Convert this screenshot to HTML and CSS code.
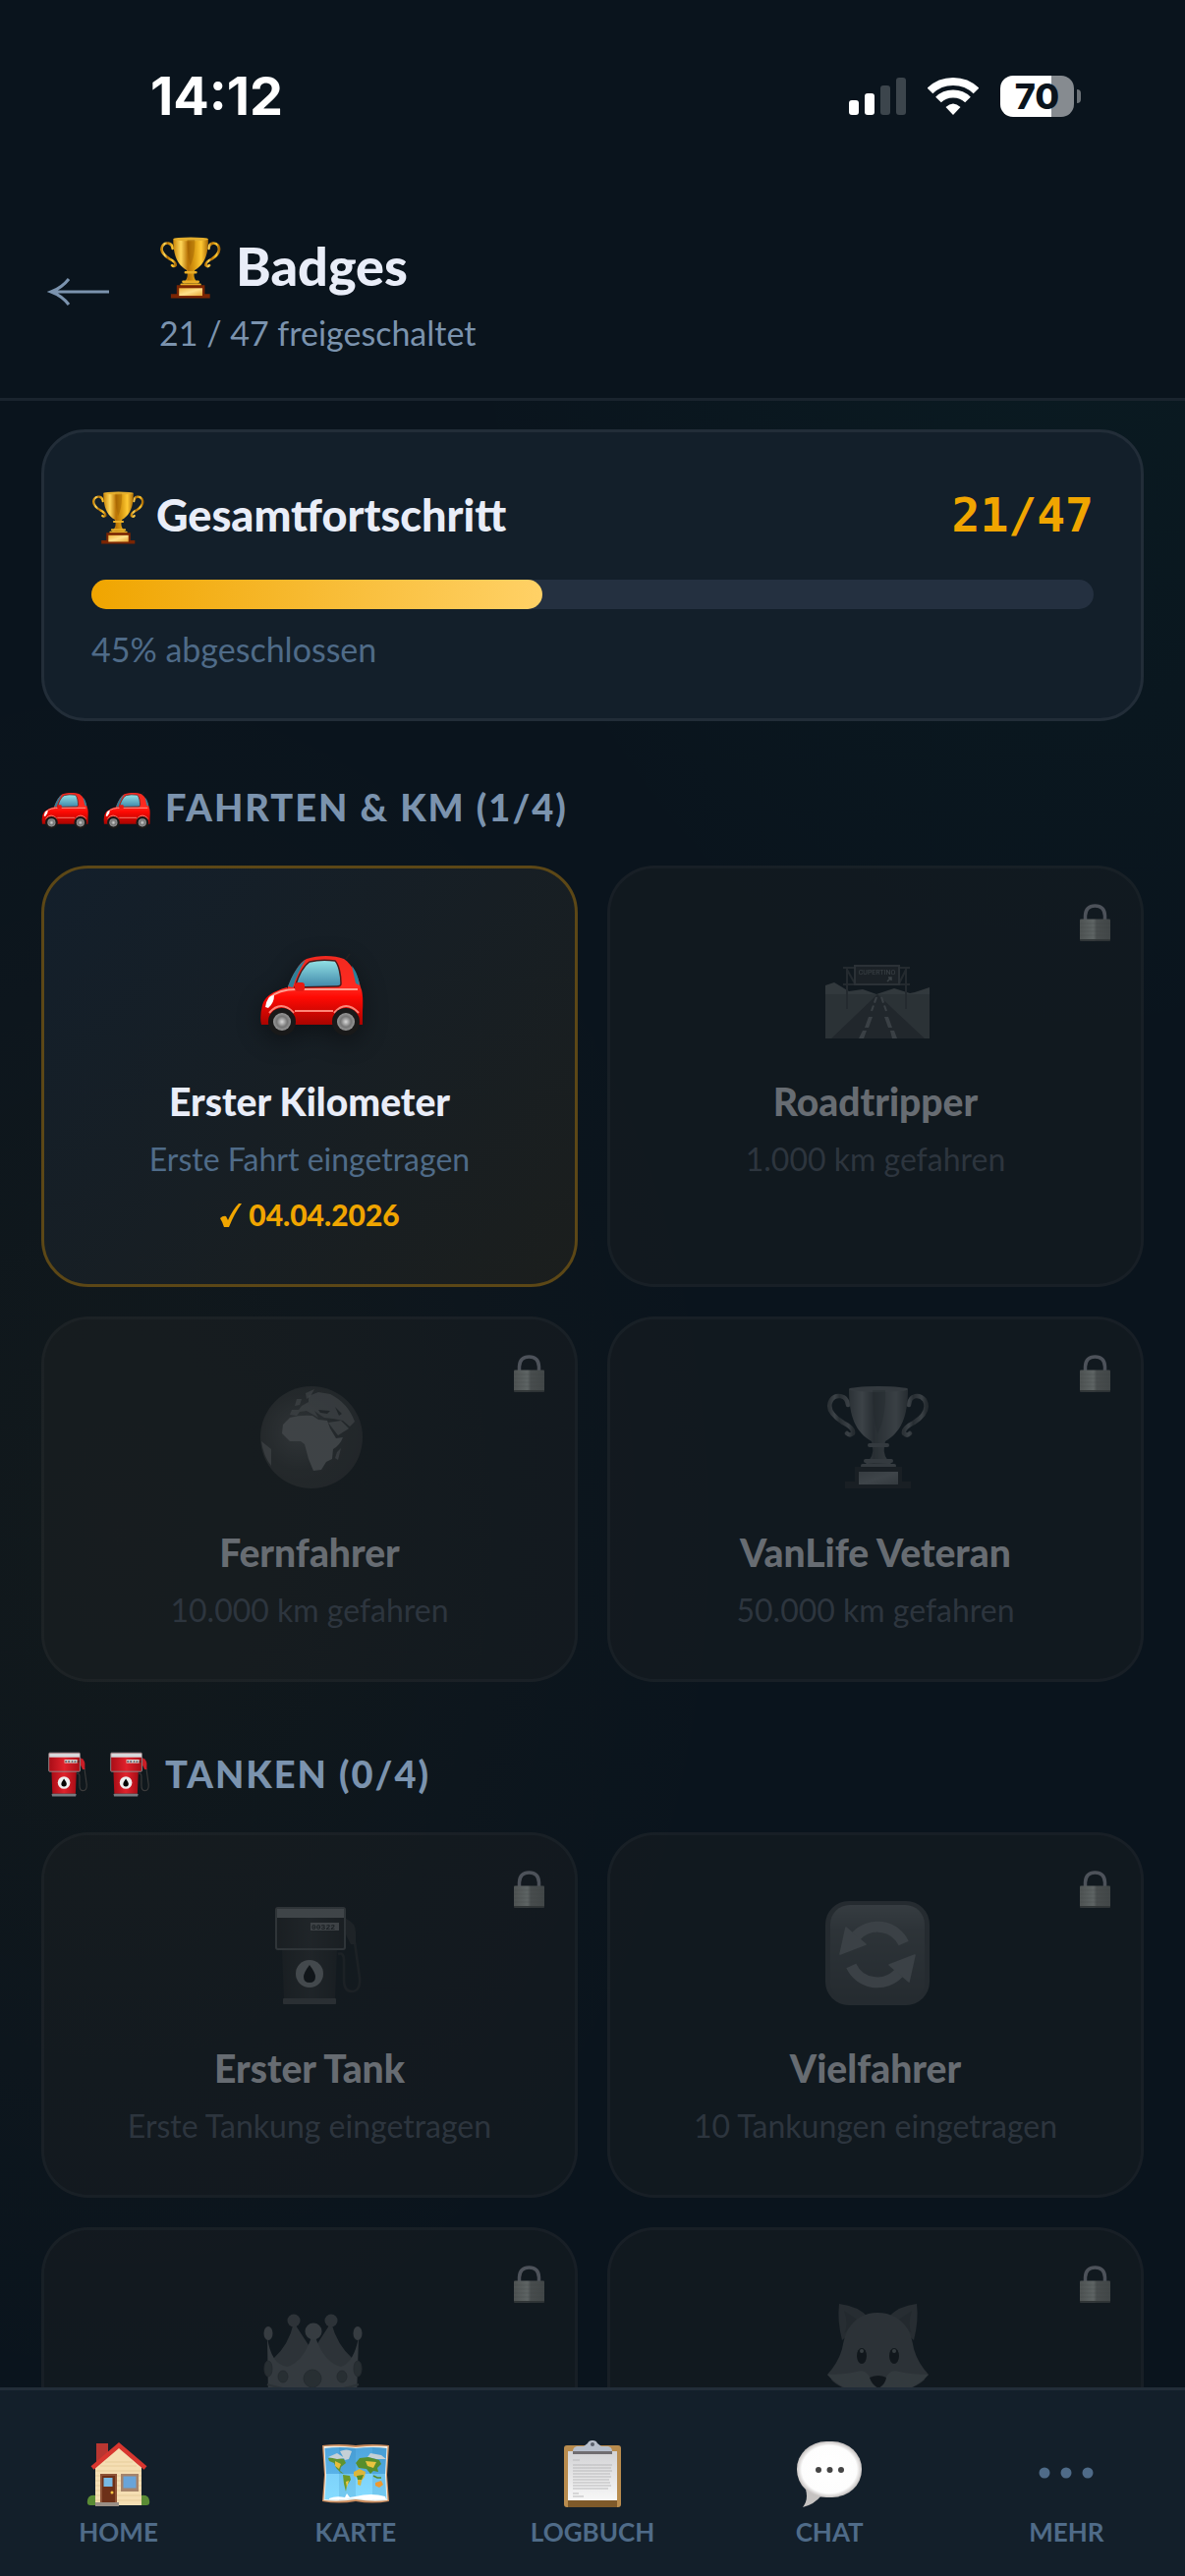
FILE: index.html
```html
<!DOCTYPE html>
<html lang="de">
<head>
<meta charset="utf-8">
<meta name="viewport" content="width=device-width, initial-scale=1">
<title>Badges</title>
<link rel="stylesheet" href="styles.css">
</head>
<body>
<svg class="sprite" aria-hidden="true">
  <defs>
    <linearGradient id="gold" x1="0" x2="1" y1="0" y2="0">
      <stop offset="0" stop-color="#c88408"/><stop offset=".22" stop-color="#ffd75a"/><stop offset=".42" stop-color="#b87204"/><stop offset=".6" stop-color="#d99a12"/><stop offset=".8" stop-color="#ffc933"/><stop offset="1" stop-color="#a86803"/>
    </linearGradient>
    <linearGradient id="plate" x1="0" x2="1" y1="0" y2="1">
      <stop offset="0" stop-color="#f0b640"/><stop offset=".5" stop-color="#ffe08a"/><stop offset="1" stop-color="#e8a838"/>
    </linearGradient>
    <linearGradient id="carRed" x1="0" x2="0" y1="0" y2="1">
      <stop offset="0" stop-color="#f02a20"/><stop offset=".45" stop-color="#ff2a20"/><stop offset=".6" stop-color="#ff0a04"/><stop offset="1" stop-color="#a80400"/>
    </linearGradient>
    <linearGradient id="glass" x1="0" x2="0" y1="0" y2="1">
      <stop offset="0" stop-color="#93e2e6"/><stop offset="1" stop-color="#3f86a8"/>
    </linearGradient>
    <radialGradient id="hub"><stop offset="0" stop-color="#d8d8d8"/><stop offset=".6" stop-color="#757575"/><stop offset="1" stop-color="#999"/></radialGradient>
    <linearGradient id="pumpRed" x1="0" x2="1" y1="0" y2="0">
      <stop offset="0" stop-color="#a80d16"/><stop offset=".5" stop-color="#e0222c"/><stop offset="1" stop-color="#a80d16"/>
    </linearGradient>
    <linearGradient id="key" x1="0" x2="0" y1="0" y2="1">
      <stop offset="0" stop-color="#b4bac2"/><stop offset=".25" stop-color="#8a929c"/><stop offset="1" stop-color="#646c76"/>
    </linearGradient>
    <radialGradient id="ocean" cx=".38" cy=".45" r=".62">
      <stop offset="0" stop-color="#8e8e8e"/><stop offset=".6" stop-color="#565656"/><stop offset="1" stop-color="#4e4e4e"/>
    </radialGradient>
    <linearGradient id="lockBody" x1="0" x2="1" y1="0" y2="0">
      <stop offset="0" stop-color="#4e5353"/><stop offset=".45" stop-color="#5e6464"/><stop offset=".55" stop-color="#484d4e"/><stop offset="1" stop-color="#414647"/>
    </linearGradient>
    <radialGradient id="bubble"><stop offset="0" stop-color="#fff"/><stop offset=".85" stop-color="#fdfdfd"/><stop offset="1" stop-color="#c9c5c4"/></radialGradient>
    <linearGradient id="sea" x1="0" x2="0" y1="0" y2="1">
      <stop offset="0" stop-color="#4fa6dd"/><stop offset=".5" stop-color="#58b2e8"/><stop offset=".5" stop-color="#7dd2fb"/><stop offset="1" stop-color="#86dcff"/>
    </linearGradient>
    <linearGradient id="paper" x1="0" x2="0" y1="0" y2="1"><stop offset="0" stop-color="#d3d3d5"/><stop offset="1" stop-color="#f7f7f7"/></linearGradient>

    <symbol id="trophy" viewBox="0 0 106 106">
      <g fill="none" stroke="url(#gold)" stroke-width="4.500" stroke-linecap="round">
        <path d="M23 20C22 9 10 9 6 15C0 25 10 33 18 38C24 41 29 45 28 49Q25 52 22 49"/>
        <path d="M85 20C86 9 96 9 101 15C106 25 98 33 90 38C84 41 79 45 80 49Q83 52 86 49"/>
      </g>
      <path d="M24 4C24 32 31 48 47 57L48 62Q50 72 41 80H67Q58 72 60 62L61 57C77 48 84 32 84 4Z" fill="url(#gold)"/>
      <ellipse cx="54" cy="4" rx="30" ry="3" fill="#e4ae2c"/>
      <path d="M48 5Q48 32 53 50Q62 32 61 5Z" fill="#8d5200" opacity=".35"/>
      <path d="M45 61H63M41 77H67M38 82H70" stroke="#e9ae28" stroke-width="4" stroke-linecap="round"/>
      <path d="M30 83H78V98H87V105H20V98H30Z" fill="#7a2503"/>
      <rect x="34" y="88" width="40" height="13" fill="url(#plate)"/>
    </symbol>

    <symbol id="car" viewBox="0 0 106 106">
      <path d="M88 25L92 20" stroke="#222" stroke-width="1.500"/>
      <path d="M28 56C34 40 41 28 48 25C60 21 76 21 86 25C95 31 101 44 103 54Q106 60 105 78V92H2Q0 84 3 72Q6 60 28 54Z" fill="url(#carRed)"/>
      <path d="M29 53C34 40 40 30 47 26C42 34 37 44 34 54ZM94 32C99 38 101 45 102 52L98 50Z" fill="#2f7f98"/>
      <path d="M36 54C40 41 45 32 51 28Q63 25 77 27C81 31 83 42 83 50Q83 53 79 53Z" fill="url(#glass)" stroke="#4b1a1a" stroke-width="1.500"/>
      <path d="M10 65Q20 55 42 56H100" fill="none" stroke="#ff9d90" stroke-width="2"/>
      <path d="M10 80Q22 66 35 80M76 80Q88 66 101 80M36 78H75" fill="none" stroke="#ff8577" stroke-width="2"/>
      <path d="M6 74Q8 62 15 62Q15 70 9 75Z" fill="#fff"/>
      <rect x="36" y="49" width="10" height="9" rx="3" fill="#e81811"/>
      <g><circle cx="23" cy="89" r="14" fill="#191919"/><circle cx="88" cy="89" r="14" fill="#191919"/><circle cx="23" cy="89" r="9" fill="url(#hub)"/><circle cx="88" cy="89" r="9" fill="url(#hub)"/></g>
    </symbol>

    <symbol id="pump" viewBox="0 0 106 106">
      <path d="M80 54Q86 52 86 60V80Q86 92 94 92Q103 92 102 78L97 42" fill="none" stroke="#3b3b3b" stroke-width="2.500"/>
      <path d="M88 18Q98 22 98 32V44H93L88 34Z" fill="#c91e27"/>
      <path d="M23 48H79L77 99H25Z" fill="url(#pumpRed)"/>
      <rect x="17" y="7" width="70" height="42" rx="2" fill="url(#pumpRed)" stroke="#8d9091" stroke-width="2"/>
      <rect x="18" y="8" width="68" height="9" fill="#d7d9dc"/>
      <rect x="52" y="22" width="29" height="8" fill="#d8cfce"/>
      <text x="53" y="29" font-family="Liberation Mono, monospace" font-size="8" font-weight="700" fill="#333">00322</text>
      <rect x="24" y="99" width="54" height="6" rx="1" fill="#777b80"/>
      <circle cx="51" cy="74" r="14" fill="#eee"/>
      <path d="M51 65Q45 73 45 77Q45 83 51 83Q57 83 57 77Q57 73 51 65Z" fill="#050505"/>
    </symbol>

    <symbol id="road" viewBox="0 0 106 106">
      <path d="M0 52L9 49L24 58L38 56L52 61L70 55L86 60L91 59L106 54V63H0Z" fill="#a5a9ae"/>
      <rect y="61" width="106" height="45" fill="#868a8e"/>
      <path d="M53 61L6 106H101Z" fill="#54595e"/>
      <path d="M52 64L47 78M57 64L62 78" stroke="#c8ccd0" stroke-width="2" stroke-dasharray="6 3"/>
      <path d="M44 84H48L44 95H40ZM60 84H64L68 95H64ZM38 98H42L39 106H34ZM66 98H70L73 106H68Z" fill="#c8ccd0"/>
      <path d="M18 34H86M18 51H86M22 34V76M82 34V76M22 36L30 50M82 36L75 50" stroke="#62676b" stroke-width="2"/>
      <rect x="30" y="32" width="45" height="19" fill="#3b4045" stroke="#82878c" stroke-width="2"/>
      <text x="52.500" y="41" text-anchor="middle" font-family="Roboto, sans-serif" font-size="7" fill="#c8ccd0">CUPERTINO</text>
      <path d="M63 48L67 44M64 44H67V47" stroke="#c8ccd0" stroke-width="1.500" fill="none"/>
    </symbol>

    <symbol id="globe" viewBox="0 0 106 106">
      <circle cx="53" cy="53" r="52" fill="url(#ocean)"/>
      <g fill="#cfcfcf">
        <path d="M31 33Q42 30 54 31L60 35L69 36L72 44L78 54L85 53Q82 61 75 65L74 75L68 78L63 86L55 87L50 75L46 60L42 57L31 57L23 49L24 40Z"/>
        <path d="M31 30L33 25H40L43 21L50 17V11L60 7L72 9Q90 18 97 37L92 42L85 36L75 34L66 33L60 29L56 26L60 33L55 30L48 26L41 27L38 31Z" opacity=".7"/>
        <path d="M70 38L83 36L91 44L80 51Z" opacity=".8"/>
        <path d="M2 57L12 65L12 82Q4 72 2 57ZM79 68L83 64L80 76L77 74ZM38 14L43 14L41 20L36 21ZM47 8L56 4L52 11L48 14Z" opacity=".7"/>
      </g>
      <path d="M60 25L72 26L69 29L62 28ZM77 22L84 29L81 31Z" fill="#4b4b4b"/>
    </symbol>

    <symbol id="refresh" viewBox="0 0 106 106">
      <rect width="106" height="106" rx="24" fill="#666e78"/>
      <rect x="5" y="4" width="96" height="98" rx="20" fill="url(#key)"/>
      <g id="turn"><path d="M79.700 43A29.500 29.500 0 0 0 31.500 35.500" fill="none" stroke="#c8d0d8" stroke-width="11"/><path d="M21 27L41 44L15 54Z" fill="#c8d0d8" stroke="#c8d0d8" stroke-width="1.500" stroke-linejoin="round"/></g>
      <use href="#turn" transform="rotate(180 53 54.500)"/>
    </symbol>

    <symbol id="crown" viewBox="0 0 106 106">
      <g fill="#8d9298"><path d="M14 64Q30 50 35 27L50 50V80H14ZM95 64Q79 50 73 27L58 50V80H95Z"/><circle cx="35" cy="25" r="6.500"/><circle cx="73" cy="25" r="6.500"/></g>
      <path d="M8 42Q12 70 28 72Q44 68 53 42H57Q66 68 83 72Q96 68 101 42L99 102Q54 112 9 102Z" fill="#aaafb4"/>
      <g fill="#b4b9be"><circle cx="55" cy="36" r="8.500"/><ellipse cx="9" cy="38" rx="4.500" ry="7"/><ellipse cx="100" cy="38" rx="4.500" ry="7"/></g>
      <path d="M8 90Q54 104 101 90" fill="none" stroke="#85898e" stroke-width="2"/>
      <g fill="#777c81" stroke="#656a70" stroke-width="1"><ellipse cx="24" cy="82" rx="5" ry="6"/><ellipse cx="54" cy="84" rx="9" ry="9"/><ellipse cx="84" cy="82" rx="5" ry="6"/><ellipse cx="9" cy="74" rx="4" ry="8"/><ellipse cx="100" cy="74" rx="4" ry="8"/></g>
    </symbol>

    <symbol id="fox" viewBox="0 0 106 106">
      <path d="M14 8Q33 10 44 22L17 45Q12 25 14 8ZM93 8Q74 10 64 22L90 45Q95 25 93 8Z" fill="#6f757b"/>
      <path d="M19 15Q24 30 19 38L34 25ZM88 15Q83 30 88 38L73 25Z" fill="#5c6268"/>
      <path d="M53 17Q73 17 84 34Q88 42 90 54Q94 68 105 80L99 82L101 85Q90 96 53 104Q15 96 6 85L8 82L2 80Q13 68 17 54Q19 42 23 34Q34 17 53 17Z" fill="#858b91"/>
      <path d="M2 80Q20 80 32 77Q42 74 46 85L53 88L61 85Q65 74 75 77Q87 80 105 80Q92 96 53 104Q15 96 2 80Z" fill="#a9aeb3"/>
      <ellipse cx="37" cy="61" rx="5" ry="8" fill="#111"/><ellipse cx="70" cy="61" rx="5" ry="8" fill="#111"/>
      <circle cx="37" cy="56" r="2" fill="#bbb"/><circle cx="70" cy="56" r="2" fill="#bbb"/>
      <path d="M45 83Q54 79 62 83Q61 90 54 94Q47 90 45 83Z" fill="#111"/>
    </symbol>

    <symbol id="lock" viewBox="0 0 31 38">
      <path d="M5.500 16V12Q6 2 15.500 2Q25 2 25.500 12V16" fill="none" stroke="#4d525a" stroke-width="3.500"/>
      <rect y="15.500" width="31" height="22" rx="1" fill="url(#lockBody)"/>
      <path d="M0 20H31M0 24H31M0 28H31M0 32H31" stroke="#3d4243" stroke-width=".5" opacity=".5"/>
      <rect y="36" width="31" height="1.500" fill="#303536"/>
    </symbol>

    <symbol id="house" viewBox="0 0 68 68">
      <path d="M11 3H23V16L11 27Z" fill="#b93631"/>
      <path d="M34 7L57 27V66H10V27Z" fill="#f5deb3"/>
      <path d="M10 31H57M10 36H57M10 41H57M10 46H57M10 51H57M10 56H57M10 61H57M20 22H48M15 26H52" stroke="#dcc08e" stroke-width=".6"/>
      <path d="M7 28L34 5L61 28" fill="none" stroke="#d8362f" stroke-width="4.500" stroke-linejoin="miter"/>
      <rect x="15" y="34" width="17" height="29" fill="#8d5236"/><rect x="17" y="36" width="13" height="27" fill="#6d3018"/>
      <rect x="18.500" y="38" width="9" height="9" fill="#78b9e3"/><circle cx="27" cy="53" r="1.500" fill="#f4c542"/>
      <rect x="36" y="34" width="18" height="18" fill="#a5836a"/><rect x="38.500" y="36.500" width="13" height="12" fill="#69a4d8"/>
      <path d="M10 63H34V67H10Z" fill="#9a8f86"/>
      <path d="M10 56Q3 55 2 61Q1 66 5 66H10ZM57 56Q64 55 65 61Q66 66 62 66H57Z" fill="#5a8b35"/>
    </symbol>

    <symbol id="map" viewBox="0 0 68 68">
      <path d="M0 5Q17 3 34 5Q51 3 68 5L66 35L68 62Q51 65 34 62Q17 65 0 62L2 35Z" fill="#c78a5c"/>
      <path d="M1.500 6Q17 5 34 7Q51 5 66.500 6L65 35L66.500 61Q51 63 34 60Q17 63 1.500 61L3 35Z" fill="#f4f0e6"/>
      <path d="M2.500 8Q17 6 34 8Q51 6 65.500 8L64 35L65.500 60Q51 61 34 59Q17 61 2.500 60L4 35Z" fill="url(#sea)"/>
      <path d="M17 7Q26 7 34 8V59Q26 60 17 61ZM51 7Q59 7 65 8L64 35L65 60Q58 60 51 61Z" fill="#1d6fa8" opacity=".16"/>
      <path d="M6 18Q14 16 22 19L24 23L19 27L18 31L22 34L19 33L14 28L12 23L7 21Z" fill="#5f9330"/>
      <path d="M13 21L19 24L17 29L13 26Z" fill="#e5bd3a"/>
      <path d="M18 11Q25 8 30 11L27 19L23 20ZM6 17L15 13L23 18L15 19ZM49 13L60 15L65 19L55 19L46 17Z" fill="#c5d0d6"/>
      <path d="M21 35L28 36L29 40L25 46L24 52L22 44Z" fill="#6d9a28"/><path d="M24 42L27 41L25 48Z" fill="#f0c845"/>
      <path d="M34 23L38 18L47 17L58 20L60 24L56 28L57 32L52 31L49 34L45 29L37 28Z" fill="#578e2c"/><path d="M44 21L55 22L52 28L46 26Z" fill="#e9c43f"/>
      <path d="M32 32L38 29L44 32L43 37L40 41L39 46L36 45L36 38L32 36Z" fill="#dcb63a"/><path d="M35 36L42 35L40 40L36 40Z" fill="#548a26"/>
      <path d="M54 43L60 41L62 45L58 48L54 46Z" fill="#ee9930"/><path d="M52 36L56 38L60 38" stroke="#568c2b" stroke-width="1.500" fill="none"/>
      <path d="M7 59Q14 56 23 58L25 54L28 58L34 57Q50 53 64 57L65 60Q51 62 34 59Q17 61 7 60Z" fill="#fff"/>
    </symbol>

    <symbol id="clipboard" viewBox="0 0 68 68">
      <rect x="5" y="5" width="58" height="63" rx="3" fill="#b98c4e"/>
      <rect x="9" y="60" width="50" height="8" fill="#7f5a2a"/>
      <rect x="9" y="11" width="50" height="50" fill="url(#paper)"/>
      <path d="M14 20H21M14 25H54M14 28H53M14 31H54M14 34H52M14 37H53M14 40H51M14 43H52M14 46H53M14 49H50M14 54H20M14 57H25" stroke="#b9b9bb" stroke-width="1"/>
      <path d="M25 6L29 3Q30 0 34 0Q38 0 39 3L43 6H50Q54 7 54 11V13H14V11Q14 7 18 6Z" fill="#b7bfcc"/>
      <path d="M14 11H54V14H14Z" fill="#706d70"/><circle cx="34" cy="4" r="2" fill="#59606c"/>
    </symbol>

    <symbol id="chat" viewBox="0 0 68 68">
      <path d="M10 50Q13 60 7 68Q19 65 26 56Z" fill="#c5c2c1"/>
      <rect x="1" y="1" width="66" height="57" rx="30" ry="28" fill="url(#bubble)"/>
      <circle cx="23" cy="30" r="3" fill="#444"/><circle cx="34.500" cy="30" r="3" fill="#444"/><circle cx="46" cy="30" r="3" fill="#444"/>
    </symbol>
  </defs>
</svg>

<div class="app">
  <div class="statusbar">
    <span class="time">14:12</span>
    <div class="system">
      <svg width="58" height="38" viewBox="0 0 58 38" aria-label="Mobilfunk"><rect y="23" width="10" height="15" rx="3" fill="#fff"/><rect x="16" y="16" width="10" height="22" rx="3" fill="#fff"/><rect x="32" y="8" width="10" height="30" rx="3" fill="#3c454c"/><rect x="48" width="10" height="38" rx="3" fill="#3c454c"/></svg>
      <svg width="52" height="38" viewBox="0 0 52 38" aria-label="WLAN"><g fill="none" stroke="#fff" stroke-width="8"><path d="M2.500 13.500Q12 4 26 4Q40 4 49.500 13.500"/><path d="M11 22.500Q17 16.500 26 16.500Q35 16.500 41 22.500"/></g><path d="M18.500 30Q26 23 33.500 30L26 38Z" fill="#fff"/></svg>
      <div class="battery"><span class="battery-level">70</span></div>
    </div>
  </div>

  <header class="topbar">
    <button class="back" type="button" aria-label="Zurück">
      <svg width="78" height="48" viewBox="0 0 78 48"><path d="M10 21H69M28 8Q21 17 10 21Q21 25 28 34" fill="none" stroke="#7b93ae" stroke-width="3"/></svg>
    </button>
    <div class="heading">
      <h1 class="page-title"><svg class="icon-title"><use href="#trophy"/></svg>Badges</h1>
      <p class="page-sub">21 / 47 freigeschaltet</p>
    </div>
  </header>

  <main class="content">
    <section class="progress-card">
      <div class="progress-head">
        <h2 class="progress-title"><svg class="icon-progress"><use href="#trophy"/></svg>Gesamtfortschritt</h2>
        <span class="progress-count">21/47</span>
      </div>
      <div class="track"><div class="fill" style="width:45%"></div></div>
      <p class="progress-note">45% abgeschlossen</p>
    </section>

    <section class="group">
      <h2 class="group-title"><svg class="icon-group"><use href="#car"/></svg><svg class="icon-group"><use href="#car"/></svg>FAHRTEN &amp; KM (1/4)</h2>
      <div class="grid">
        <article class="badge unlocked">
          <div class="badge-icon"><svg><use href="#car"/></svg></div>
          <h3 class="badge-name">Erster Kilometer</h3>
          <p class="badge-desc">Erste Fahrt eingetragen</p>
          <p class="badge-date"><svg width="24" height="24" viewBox="0 0 24 24" aria-hidden="true"><path d="M1 15Q4 12 7 13L9 17Q14 6 20 0H23Q16 9 10 24H5Q3 18 1 15Z" fill="#f0a500"/></svg>04.04.2026</p>
        </article>
        <article class="badge locked">
          <svg class="badge-lock"><use href="#lock"/></svg>
          <div class="badge-icon"><svg><use href="#road"/></svg></div>
          <h3 class="badge-name">Roadtripper</h3>
          <p class="badge-desc">1.000 km gefahren</p>
        </article>
        <article class="badge locked">
          <svg class="badge-lock"><use href="#lock"/></svg>
          <div class="badge-icon"><svg><use href="#globe"/></svg></div>
          <h3 class="badge-name">Fernfahrer</h3>
          <p class="badge-desc">10.000 km gefahren</p>
        </article>
        <article class="badge locked">
          <svg class="badge-lock"><use href="#lock"/></svg>
          <div class="badge-icon"><svg><use href="#trophy"/></svg></div>
          <h3 class="badge-name">VanLife Veteran</h3>
          <p class="badge-desc">50.000 km gefahren</p>
        </article>
      </div>
    </section>

    <section class="group">
      <h2 class="group-title"><svg class="icon-group"><use href="#pump"/></svg><svg class="icon-group"><use href="#pump"/></svg>TANKEN (0/4)</h2>
      <div class="grid">
        <article class="badge locked">
          <svg class="badge-lock"><use href="#lock"/></svg>
          <div class="badge-icon"><svg><use href="#pump"/></svg></div>
          <h3 class="badge-name">Erster Tank</h3>
          <p class="badge-desc">Erste Tankung eingetragen</p>
        </article>
        <article class="badge locked">
          <svg class="badge-lock"><use href="#lock"/></svg>
          <div class="badge-icon"><svg><use href="#refresh"/></svg></div>
          <h3 class="badge-name">Vielfahrer</h3>
          <p class="badge-desc">10 Tankungen eingetragen</p>
        </article>
        <article class="badge locked">
          <svg class="badge-lock"><use href="#lock"/></svg>
          <div class="badge-icon"><svg><use href="#crown"/></svg></div>
        </article>
        <article class="badge locked">
          <svg class="badge-lock"><use href="#lock"/></svg>
          <div class="badge-icon"><svg><use href="#fox"/></svg></div>
        </article>
      </div>
    </section>
  </main>

  <nav class="tabbar">
    <a class="tab" href="#home"><svg><use href="#house"/></svg>HOME</a>
    <a class="tab" href="#karte"><svg><use href="#map"/></svg>KARTE</a>
    <a class="tab" href="#logbuch"><svg><use href="#clipboard"/></svg>LOGBUCH</a>
    <a class="tab" href="#chat-tab"><svg><use href="#chat"/></svg>CHAT</a>
    <a class="tab" href="#mehr"><svg viewBox="0 0 68 68"><g fill="#4f6b88"><circle cx="12" cy="33" r="5.500"/><circle cx="34" cy="33" r="5.500"/><circle cx="56" cy="33" r="5.500"/></g></svg>MEHR</a>
  </nav>
</div>
</body>
</html>
```
FILE: styles.css
```css
:root {
  --bg: #0a141d;
  --surface: #131f2a;
  --line: #222d38;
  --text: #e9edf8;
  --muted: #7b93ae;
  --faint: #4f6b88;
  --gold: #f0a500;
}

* { box-sizing: border-box; }

body {
  margin: 0;
  background: var(--bg);
  color: var(--text);
  font-family: Lato, "Open Sans", sans-serif;
}

h1, h2, h3, p { margin: 0; }
h1, h2, h3 { font-weight: 900; }
svg { display: block; flex: none; }
.sprite { position: absolute; width: 0; height: 0; }

.app {
  display: flex;
  flex-direction: column;
  height: 100vh;
}

/* Status bar */
.statusbar {
  display: flex;
  justify-content: space-between;
  align-items: flex-start;
  height: 192px;
  padding: 68px 113px 0 153px;
}
.time {
  font: 700 54px/60px Inter, sans-serif;
  color: #fff;
}
.system {
  display: flex;
  align-items: center;
  gap: 22px;
  padding-top: 9px;
}
.battery {
  position: relative;
  width: 75px;
  height: 42px;
  border-radius: 13px;
  background: linear-gradient(90deg, #fff 70%, #868b90 70%);
  color: var(--bg);
  text-align: center;
}
.battery::after {
  content: "";
  position: absolute;
  left: 78px;
  top: 14px;
  width: 4px;
  height: 14px;
  border-radius: 0 4px 4px 0;
  background: #6c7277;
}
.battery-level { font: 800 36px/42px Inter, sans-serif; }

/* Header */
.topbar {
  display: flex;
  align-items: center;
  gap: 42px;
  padding: 46px 42px 44px;
  border-bottom: 3px solid #1a242e;
}
.back {
  padding: 0;
  border: 0;
  background: none;
}
.heading { display: grid; gap: 12px; }
.page-title {
  display: flex;
  align-items: flex-end;
  gap: 15px;
  font-size: 54px;
  line-height: 66px;
}
.icon-title { width: 63px; height: 63px; }
.page-sub { font-size: 34px; line-height: 45px; color: var(--muted); }

/* Scrolling content */
.content {
  flex: 1;
  min-height: 0;
  overflow-y: auto;
  scrollbar-width: none;
  padding: 29px 42px 42px;
  background:
    radial-gradient(900px 1200px at 90% -8%, rgba(0, 200, 150, .04), transparent 70%),
    radial-gradient(850px 1200px at 10% 57%, rgba(240, 165, 0, .035), transparent 75%);
}

.progress-card {
  padding: 48px;
  margin-bottom: 63px;
  border: 3px solid var(--line);
  border-radius: 45px;
  background: var(--surface);
}
.progress-head {
  display: flex;
  align-items: center;
  justify-content: space-between;
  height: 72px;
  margin-bottom: 30px;
}
.progress-title {
  display: flex;
  align-items: flex-end;
  gap: 12px;
  font-size: 45px;
  line-height: 60px;
}
.icon-progress { width: 54px; height: 54px; }
.progress-count {
  font: 700 48px/60px "DejaVu Sans Mono", monospace;
  color: var(--gold);
}
.track {
  height: 30px;
  margin-bottom: 18px;
  border-radius: 15px;
  background: #243040;
}
.fill {
  height: 100%;
  border-radius: 15px;
  background: linear-gradient(90deg, var(--gold), #ffd166);
}
.progress-note { font-size: 34px; line-height: 45px; color: var(--faint); }

/* Badge groups */
.group { margin-bottom: 69px; }
.group-title {
  display: flex;
  align-items: center;
  gap: 15px;
  margin-bottom: 36px;
  font-size: 38px;
  line-height: 48px;
  letter-spacing: 2px;
  color: var(--muted);
}
.icon-group { width: 48px; height: 48px; }

.grid {
  display: grid;
  grid-template-columns: 1fr 1fr;
  gap: 30px;
}
.badge {
  position: relative;
  display: flex;
  flex-direction: column;
  align-items: center;
  gap: 12px;
  min-height: 372px;
  padding: 48px;
  border: 3px solid;
  border-radius: 48px;
  text-align: center;
}
.unlocked {
  border-color: #5c4716;
  background: linear-gradient(135deg, #131f2b, #1b1e1d);
}
.locked {
  border-color: rgba(255, 255, 255, .03);
  background: rgba(38, 38, 38, .25);
}
.badge-icon {
  display: flex;
  align-items: center;
  height: 144px;
  margin-bottom: 9px;
  padding-left: 3px;
}
.badge-icon svg { width: 106px; height: 106px; }
.unlocked .badge-icon { filter: drop-shadow(0 6px 12px rgba(0, 0, 0, .4)); }
.locked .badge-icon { filter: grayscale(1) opacity(.22); }
.badge-lock {
  position: absolute;
  top: 36px;
  right: 31px;
  width: 31px;
  height: 38px;
}
.badge-name { font-size: 39px; line-height: 48px; }
.badge-desc { font-size: 32px; line-height: 45px; color: var(--faint); white-space: nowrap; }
.locked .badge-name { color: #676c72; }
.locked .badge-desc { color: #2d353e; }
.badge-date {
  display: flex;
  align-items: center;
  gap: 6px;
  font-size: 30px;
  font-weight: 900;
  line-height: 45px;
  color: var(--gold);
}

/* Bottom navigation */
.tabbar {
  display: grid;
  grid-template-columns: repeat(5, 1fr);
  height: 192px;
  padding-top: 51px;
  border-top: 3px solid var(--line);
  background: var(--surface);
}
.tab {
  display: flex;
  flex-direction: column;
  align-items: center;
  gap: 9px;
  font-size: 26px;
  font-weight: 700;
  line-height: 33px;
  letter-spacing: 0;
  color: var(--faint);
  text-decoration: none;
}
.tab svg { width: 68px; height: 68px; }
```
